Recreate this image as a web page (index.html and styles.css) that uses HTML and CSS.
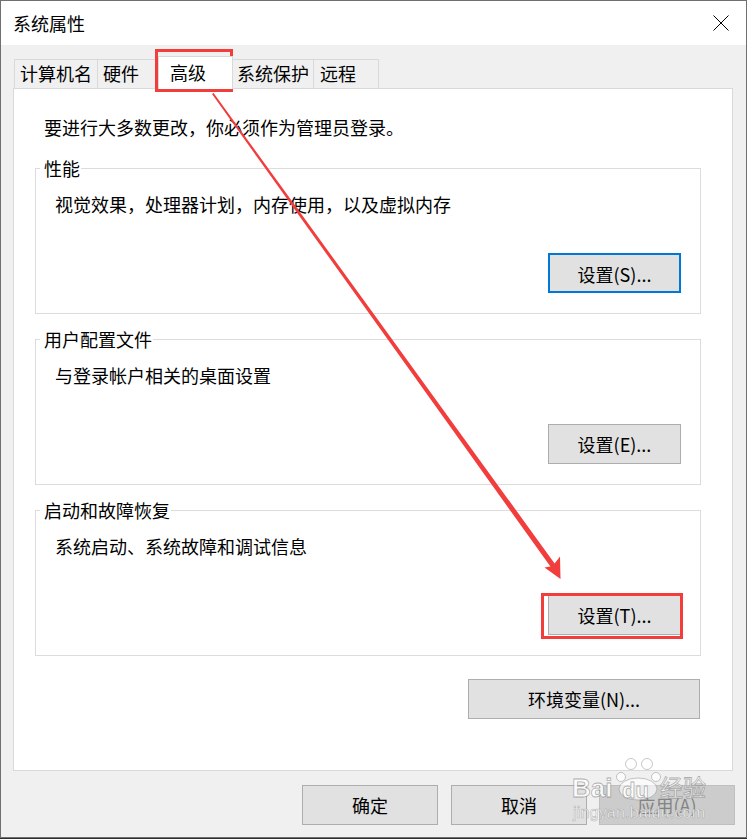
FILE: index.html
```html
<!DOCTYPE html>
<html lang="zh-CN">
<head>
<meta charset="utf-8">
<title>系统属性</title>
<link rel="stylesheet" href="styles.css">
</head>
<body>
<div class="window">
  <div class="titlebar">
    <span class="title">系统属性</span>
    <svg class="close" width="16" height="16" viewBox="0 0 16 16"><path d="M0.5 0.5 L15.5 15.5 M15.5 0.5 L0.5 15.5" stroke="#000" stroke-width="1" fill="none"/></svg>
  </div>
  <div class="client">
    <div class="tabs">
      <div class="tab t1">计算机名</div>
      <div class="tab t2">硬件</div>
      <div class="tab active">高级</div>
      <div class="tab t4">系统保护</div>
      <div class="tab t5">远程</div>
    </div>
    <div class="panel">
      <p class="intro">要进行大多数更改，你必须作为管理员登录。</p>
      <fieldset class="group">
        <legend>性能</legend>
        <p class="desc">视觉效果，处理器计划，内存使用，以及虚拟内存</p>
        <div class="btnrow"><button class="btn focus">设置(S)...</button></div>
      </fieldset>
      <fieldset class="group">
        <legend>用户配置文件</legend>
        <p class="desc">与登录帐户相关的桌面设置</p>
        <div class="btnrow"><button class="btn">设置(E)...</button></div>
      </fieldset>
      <fieldset class="group">
        <legend>启动和故障恢复</legend>
        <p class="desc">系统启动、系统故障和调试信息</p>
        <div class="btnrow"><button class="btn">设置(T)...</button></div>
      </fieldset>
      <div class="envrow"><button class="btn wide">环境变量(N)...</button></div>
    </div>
    <div class="footer">
      <button class="btn ok">确定</button>
      <button class="btn cancel">取消</button>
      <button class="btn disabled">应用(A)</button>
    </div>
  </div>
  <svg class="annot" width="747" height="839" viewBox="0 0 747 839">
    <rect x="156.5" y="50.5" width="75" height="40" fill="none" stroke="#f23d3d" stroke-width="3"/>
    <rect x="542.5" y="594.5" width="139" height="43" fill="none" stroke="#f23d3d" stroke-width="3"/>
    <polygon points="212,94 213.6,93 554.6,563.4 560,556.5 560.5,579 544.5,567.5 550.4,566.6" fill="#f23d3d"/>
    <g class="wm">
      <text x="572" y="797" font-family="Liberation Sans, sans-serif" font-weight="bold" font-size="26" fill="rgba(255,255,255,0.85)" stroke="rgba(100,100,100,0.5)" stroke-width="0.8">Bai</text>
      <circle cx="621" cy="777" r="4.5" fill="rgba(255,255,255,0.8)" stroke="rgba(100,100,100,0.45)" stroke-width="0.8"/>
      <circle cx="631" cy="764" r="5.5" fill="rgba(255,255,255,0.8)" stroke="rgba(100,100,100,0.45)" stroke-width="0.8"/>
      <circle cx="647" cy="764" r="5.5" fill="rgba(255,255,255,0.8)" stroke="rgba(100,100,100,0.45)" stroke-width="0.8"/>
      <circle cx="656" cy="777" r="4.5" fill="rgba(255,255,255,0.8)" stroke="rgba(100,100,100,0.45)" stroke-width="0.8"/>
      <ellipse cx="638" cy="789" rx="19" ry="11" fill="rgba(255,255,255,0.65)" stroke="rgba(100,100,100,0.45)" stroke-width="0.8"/>
      <text x="622" y="798" font-family="Liberation Sans, sans-serif" font-weight="bold" font-size="22" fill="rgba(255,255,255,0.9)" stroke="rgba(100,100,100,0.5)" stroke-width="0.8">du</text>
      <text x="660" y="796" font-family="Noto Sans CJK SC, sans-serif" font-size="23" fill="rgba(255,255,255,0.85)" stroke="rgba(100,100,100,0.5)" stroke-width="0.8">经验</text>
      <text x="573" y="818" font-family="Liberation Sans, sans-serif" font-size="16" textLength="132" lengthAdjust="spacing" fill="rgba(255,255,255,0.9)" stroke="rgba(100,100,100,0.45)" stroke-width="0.6">jingyan.baidu.com</text>
    </g>
  </svg>
</div>
</body>
</html>
```

FILE: styles.css
```css
html, body {
  margin: 0;
  background: #2d2d2d;
}

body {
  font-family: "Noto Sans CJK SC", "Noto Sans", sans-serif;
  font-size: 18px;
  color: #000;
}

.window {
  position: relative;
  width: 747px;
  height: 838px;
  box-sizing: border-box;
  border: 1px solid #707070;
  display: flex;
  flex-direction: column;
  background: #f0f0f0;
}

.titlebar {
  flex: none;
  height: 44px;
  background: #fff;
  display: flex;
  align-items: center;
  padding-left: 12px;
}

.title {
  line-height: 24px;
}

.close {
  margin-left: auto;
  margin-right: 17px;
}

.client {
  flex: 1;
  display: flex;
  flex-direction: column;
  padding-left: 12px;
}

.tabs {
  display: flex;
  align-items: flex-end;
  height: 32px;
  margin-top: 11px;
  padding-left: 1px;
}

.tab {
  box-sizing: border-box;
  height: 29px;
  border: 1px solid #d9d9d9;
  border-bottom: 0;
  background: #f0f0f0;
  line-height: 27px;
  padding-left: 5px;
  margin-left: -1px;
  white-space: nowrap;
}

.t1 { width: 84px; margin-left: 0; }
.t2 { width: 62px; }
.t4 { width: 82px; padding-left: 4px; }
.t5 { width: 66px; padding-left: 6px; }

.tab.active {
  position: relative;
  z-index: 1;
  width: 75px;
  height: 33px;
  margin-bottom: -1px;
  background: #fff;
  line-height: 30px;
  padding-left: 11px;
}

.panel {
  flex: none;
  box-sizing: border-box;
  width: 720px;
  height: 683px;
  background: #fff;
  border: 1px solid #d9d9d9;
  padding: 26px 31px 0 21px;
}

.intro {
  margin: 0 0 0 9px;
  line-height: 24px;
}

.group {
  margin: 17px 0 0;
  padding: 0 19px 20px 4px;
  border: 1px solid #dcdcdc;
  min-width: 0;
}

.group + .group {
  margin-top: 13px;
}

.group legend {
  padding: 0 1px 0 4px;
  line-height: 24px;
}

.desc {
  margin: 12px 0 0 15px;
  line-height: 24px;
}

.btnrow {
  display: flex;
  justify-content: flex-end;
  margin-top: 37px;
}

.btn {
  box-sizing: border-box;
  width: 133px;
  height: 40px;
  margin: 0;
  padding: 0;
  background: #e1e1e1;
  border: 1px solid #adadad;
  font-family: "Noto Sans CJK SC", "Noto Sans", sans-serif;
  font-size: 18px;
  color: #000;
  line-height: 38px;
}

.btn.focus {
  border: 2px solid #0078d7;
}

.envrow {
  display: flex;
  justify-content: flex-end;
  margin-top: 23px;
  padding-right: 1px;
}

.btn.wide {
  width: 232px;
}

.footer {
  display: flex;
  justify-content: flex-end;
  margin-top: 14px;
  padding-right: 11px;
}

.footer .btn {
  width: 136px;
}

.footer .ok {
  margin-right: 13px;
}

.footer .cancel {
  margin-right: 12px;
}

.btn.disabled {
  background: #cccccc;
  border-color: #bfbfbf;
  color: #838383;
}

.annot {
  position: absolute;
  left: -1px;
  top: -1px;
  pointer-events: none;
}
```
